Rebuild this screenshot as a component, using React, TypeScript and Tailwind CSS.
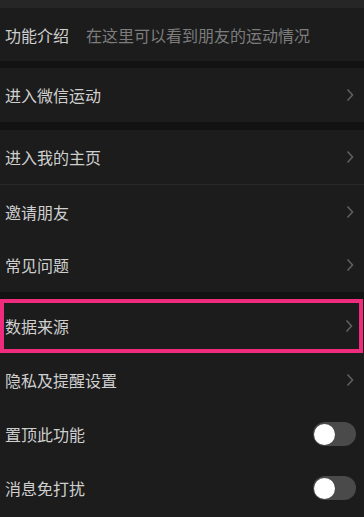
const font = { fontFamily: '"Noto Sans CJK SC", "Noto Sans", sans-serif' };

function Chevron() {
  return (
    <svg width="8" height="14" viewBox="0 0 8 14" className="mr-[10px]">
      <path d="M1.5 1.5 L6.5 7 L1.5 12.5" fill="none" stroke="#5f5f5f" strokeWidth="1.6" />
    </svg>
  );
}

function Toggle() {
  return (
    <div className="w-[43px] h-[24px] rounded-full bg-[#4a4a4a] flex items-center mr-[8px]">
      <div className="w-[21px] h-[21px] rounded-full bg-white ml-[1px]" />
    </div>
  );
}

function Row({ label, right, h = "h-[54px]" }: { label: string; right: "chevron" | "toggle"; h?: string }) {
  return (
    <div className={`${h} flex items-center justify-between bg-[#1c1c1c] pl-[5px]`}>
      <span className="text-[16px] text-[#cfcfcf]">{label}</span>
      {right === "chevron" ? <Chevron /> : <Toggle />}
    </div>
  );
}

export default function App() {
  return (
    <div className="w-[364px] h-[517px] overflow-hidden bg-[#121212]" style={font}>
      <div className="h-[8px] bg-[#262626]" />
      <div className="h-[53px] flex items-center bg-[#1c1c1c] pl-[5px] gap-[17px]">
        <span className="text-[16px] text-[#cfcfcf]">功能介绍</span>
        <span className="text-[16px] text-[#7c7c7c]">在这里可以看到朋友的运动情况</span>
      </div>
      <div className="h-[7px] bg-[#121212]" />
      <Row label="进入微信运动" right="chevron" />
      <div className="h-[8px] bg-[#121212]" />
      <Row label="进入我的主页" right="chevron" />
      <div className="h-px bg-[#282828]" />
      <Row label="邀请朋友" right="chevron" h="h-[53px]" />
      <Row label="常见问题" right="chevron" />
      <div className="h-[7px] bg-[#121212]" />
      <div className="h-[54px] border-[4px] border-[#ee2b7c] bg-[#1c1c1c] flex items-center justify-between pl-[1px] mr-[1px]">
        <span className="text-[16px] text-[#cfcfcf]">数据来源</span>
        <svg width="8" height="14" viewBox="0 0 8 14" className="mr-[6px]">
          <path d="M1.5 1.5 L6.5 7 L1.5 12.5" fill="none" stroke="#5f5f5f" strokeWidth="1.6" />
        </svg>
      </div>
      <Row label="隐私及提醒设置" right="chevron" />
      <Row label="置顶此功能" right="toggle" />
      <Row label="消息免打扰" right="toggle" />
      <div className="h-[10px] bg-[#1c1c1c]" />
    </div>
  );
}
